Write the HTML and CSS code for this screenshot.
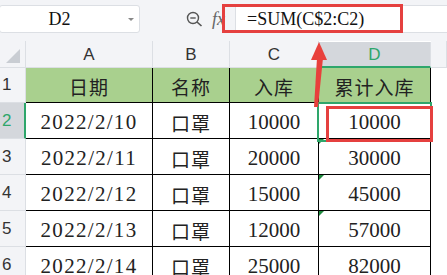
FILE: index.html
```html
<!DOCTYPE html>
<html lang="zh-CN">
<head>
    <meta charset="UTF-8">
    <title>累计入库</title>
    <link rel="stylesheet" href="styles.css">
</head>
<body>
    <div class="app">
        <div class="toolbar">
            <div class="name-box">
                <span class="cell-ref">D2</span>
                <span class="caret"></span>
            </div>
            <svg class="zoom-icon" width="18" height="16" viewBox="0 0 18 16">
                <circle cx="7" cy="7" r="5.5" fill="none" stroke="#555" stroke-width="1.4"/>
                <line x1="4.3" y1="7" x2="9.7" y2="7" stroke="#555" stroke-width="1.4"/>
                <line x1="11" y1="11" x2="15.5" y2="15" stroke="#555" stroke-width="1.6"/>
            </svg>
            <span class="fx">fx</span>
            <div class="formula">=SUM(C$2:C2)</div>
        </div>

        <div class="sheet">
            <div class="corner"><span class="corner-tri"></span></div>
            <div class="col-head">A</div>
            <div class="col-head">B</div>
            <div class="col-head">C</div>
            <div class="col-head active">D</div>
            <div class="col-head"></div>

            <div class="row-head">1</div>
            <div class="cell title cjk">日期</div>
            <div class="cell title cjk">名称</div>
            <div class="cell title cjk">入库</div>
            <div class="cell title cjk">累计入库</div>
            <div class="blank"></div>

            <div class="row-head active">2</div>
            <div class="cell date">2022/2/10</div>
            <div class="cell cjk">口罩</div>
            <div class="cell num">10000</div>
            <div class="cell num">10000</div>
            <div class="blank"></div>

            <div class="row-head">3</div>
            <div class="cell date">2022/2/11</div>
            <div class="cell cjk">口罩</div>
            <div class="cell num">20000</div>
            <div class="cell num flag">30000</div>
            <div class="blank"></div>

            <div class="row-head">4</div>
            <div class="cell date">2022/2/12</div>
            <div class="cell cjk">口罩</div>
            <div class="cell num">15000</div>
            <div class="cell num flag">45000</div>
            <div class="blank"></div>

            <div class="row-head">5</div>
            <div class="cell date">2022/2/13</div>
            <div class="cell cjk">口罩</div>
            <div class="cell num">12000</div>
            <div class="cell num flag">57000</div>
            <div class="blank"></div>

            <div class="row-head">6</div>
            <div class="cell date">2022/2/14</div>
            <div class="cell cjk">口罩</div>
            <div class="cell num">25000</div>
            <div class="cell num">82000</div>
            <div class="blank"></div>
        </div>

        <!-- annotations drawn over the sheet -->
        <div class="mark-formula"></div>
        <div class="selection"></div>
        <div class="mark-cell"></div>
        <svg class="arrow" width="447" height="275" viewBox="0 0 447 275">
            <polygon points="319,42 311,60 327,60" fill="#e8403c"/>
            <polygon points="317,58 323,58 318,107 314,107" fill="#e8403c"/>
        </svg>
    </div>
</body>
</html>
```

FILE: styles.css
```css
:root {
    --bar-bg: #f3f4f7; --line: #dcdfe4; --head-sel: #d4d7dc;
    --green: #2ea66b; --fill: #a9d08e; --red: #e5403f; --ink: #222;
}
body { margin: 0; background: #fff; overflow: hidden; }
.app { position: relative; width: 447px; height: 275px; overflow: hidden; }

.toolbar {
    display: flex; align-items: flex-start; height: 41px; padding-top: 5px;
    box-sizing: border-box; background: var(--bar-bg);
}
.name-box {
    position: relative; width: 141px; height: 28px; margin-left: -1px; box-sizing: border-box;
    background: #fff; border: 1px solid var(--line); border-radius: 3px;
    display: flex; align-items: center; justify-content: center;
}
.cell-ref { font-family: "Liberation Serif", serif; font-size: 18px; color: #111; margin-left: -20px; }
.caret {
    position: absolute; right: 5px; top: 12px; width: 0; height: 0;
    border-left: 3px solid transparent; border-right: 3px solid transparent; border-top: 3px solid #888;
}
.zoom-icon { margin: 6px 0 0 46px; }
.fx {
    font-family: "Liberation Serif", serif; font-style: italic; font-size: 18px;
    color: #666; margin: 4px 0 0 8px; line-height: 20px;
}
.formula {
    flex: 1; height: 28px; margin-left: 10px; padding-left: 11px; box-sizing: border-box;
    background: #fff; border: 1px solid var(--line); border-right: none;
    font-family: "Liberation Serif", serif; font-size: 18px; line-height: 26px; color: #111;
}

.sheet {
    display: grid;
    grid-template-columns: 26px 127px 77px 89px 112px 1fr;
    grid-template-rows: 27px 35px repeat(5, 36px);
}
.corner, .col-head, .row-head {
    background: var(--bar-bg); box-sizing: border-box;
    border-right: 1px solid var(--line); border-bottom: 1px solid var(--line);
    font-family: "Liberation Sans", sans-serif; font-size: 17px; color: #333;
}
.corner { position: relative; }
.corner-tri {
    position: absolute; left: 6px; top: 8px; width: 0; height: 0;
    border-left: 14px solid transparent; border-bottom: 14px solid #c9cdd3;
}
.col-head { display: flex; align-items: center; justify-content: center; padding-top: 2px; }
.col-head.active {
    background: var(--head-sel); color: var(--green);
    border-bottom: 2px solid var(--green); margin-top: 1px;
}
.row-head { display: flex; align-items: center; padding-left: 2px; }
.row-head.active { background: var(--head-sel); color: var(--green); border-right: 2px solid var(--green); }

.cell {
    position: relative; box-sizing: border-box; display: flex; align-items: center; justify-content: center;
    border-right: 1px solid #000; border-bottom: 1px solid #000; color: var(--ink); padding-top: 3px;
}
.title { background: var(--fill); }
.cjk { font-family: "Noto Sans CJK SC", sans-serif; font-size: 19px; letter-spacing: 1px; }
.num { font-family: "Liberation Serif", serif; font-size: 21px; }
.date { font-family: "Liberation Serif", serif; font-size: 21px; letter-spacing: 1.3px; }
.flag::before {
    content: ""; position: absolute; left: 0; top: 0; width: 0; height: 0;
    border-top: 5px solid #1f8a3e; border-right: 5px solid transparent;
}

.mark-formula {
    position: absolute; left: 222px; top: 4px; width: 181px; height: 29px;
    border: 3px solid var(--red); box-sizing: border-box;
}
.selection {
    position: absolute; left: 317px; top: 102px; width: 115px; height: 40px;
    border: 2px solid var(--green); box-sizing: border-box;
}
.mark-cell {
    position: absolute; left: 326px; top: 106px; width: 107px; height: 36px;
    border: 3px solid var(--red); box-sizing: border-box;
}
.arrow { position: absolute; left: 0; top: 0; pointer-events: none; }
```
